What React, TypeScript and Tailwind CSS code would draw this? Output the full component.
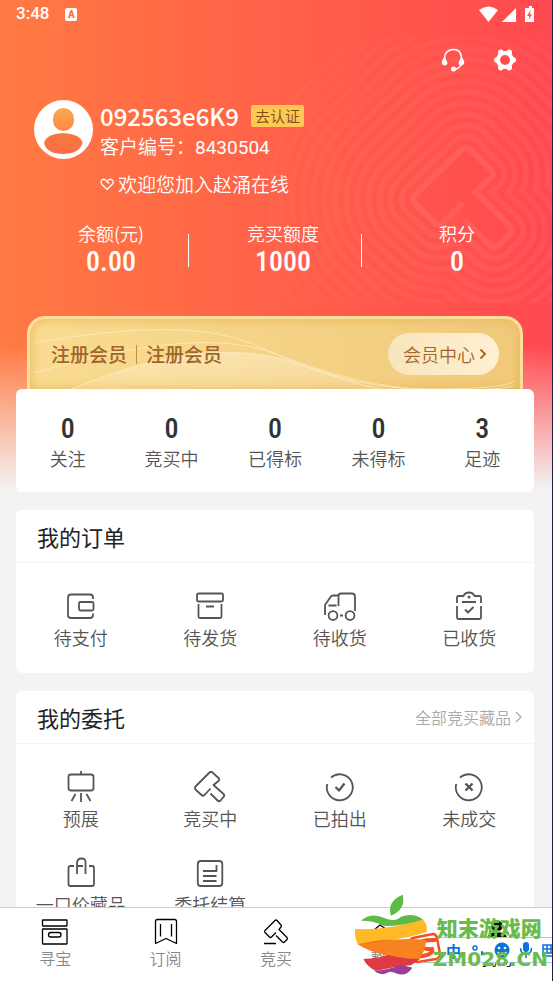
import type { ReactNode } from "react";

type Stat = { label: string; value: string };
type Entry = { label: string; icon: ReactNode };

const GAVEL_PATH =
  "M463 203 L443 223 Q439 227 435 223 L414 203 Q411 199 415 195 L461 150 Q466 145 471 150 L491 170 Q495 174 491 178 L475 192 L510 226 Q514 230 510 234 L499 245 Q495 249 490 245 L464 219";

const RINGS = [14, 13, 12, 11, 10, 9, 8, 7, 6, 5, 4, 3, 2, 1];

const counters: Stat[] = [
  { label: "关注", value: "0" },
  { label: "竞买中", value: "0" },
  { label: "已得标", value: "0" },
  { label: "未得标", value: "0" },
  { label: "足迹", value: "3" },
];

function LineIcon({ children }: { children: ReactNode }) {
  return (
    <svg
      aria-hidden="true"
      className="h-8 w-8"
      fill="none"
      stroke="currentColor"
      strokeLinecap="butt"
      strokeLinejoin="round"
      strokeWidth="1.800"
      viewBox="0 0 32 32"
    >
      {children}
    </svg>
  );
}

const orders: Entry[] = [
  {
    label: "待支付",
    icon: (
      <LineIcon>
        <path d="M28 9V7.500Q28 4.500 25 4.500H6Q3 4.500 3 7.500V25Q3 28 6 28H25Q28 28 28 25V23.500" />
        <rect height="8.500" rx="1.500" width="14.500" x="14" y="12" />
      </LineIcon>
    ),
  },
  {
    label: "待发货",
    icon: (
      <LineIcon>
        <rect height="8" rx="1.500" width="26" x="3" y="3.500" />
        <path d="M4.500 14V26.500Q4.500 28 6 28H26Q27.500 28 27.500 26.500V14M12 16.500H20" />
      </LineIcon>
    ),
  },
  {
    label: "待收货",
    icon: (
      <LineIcon>
        <path d="M1 25V15L6.500 7Q7.500 5.500 9 5.500H14M14.500 16V6Q14.500 3.500 17 3.500H28Q31 3.500 31 6.500V21M4.500 15.500H12.500M16 25.500H19" />
        <circle cx="9" cy="25.500" r="4.400" />
        <circle cx="26" cy="25.500" r="4.400" />
      </LineIcon>
    ),
  },
  {
    label: "已收货",
    icon: (
      <LineIcon>
        <path d="M4 13V7.500Q4 6 5.500 6H10.500Q12 2.500 16 2.500T21.500 6H26.500Q28 6 28 7.500V13M4 16V27.500Q4 29 5.500 29H26.500Q28 29 28 27.500V16M9 12H23M12 19.500L15 22.500L20.500 17" />
        <circle cx="16" cy="7" fill="currentColor" r=".6" />
      </LineIcon>
    ),
  },
];

const commissions: Entry[] = [
  {
    label: "预展",
    icon: (
      <LineIcon>
        <path d="M16 0V3M10.500 23L6.500 30M16 22V31M21.500 23L25.500 30" />
        <rect height="16" rx="2.500" width="25" x="3.500" y="3.500" />
      </LineIcon>
    ),
  },
  {
    label: "竞买中",
    icon: (
      <LineIcon>
        <path d="M16.500 17.500L10.500 24Q9 25.500 7.500 24L1.500 18.500Q.5 17 1.500 15.500L15.500 1.500Q17 0 18.500 1.500L24.500 7Q26 8.500 24.500 10L19.500 14L29.500 23Q31 24.500 29.500 26L26.500 29.500Q25 31 23.500 29.500L16.500 22.500" />
      </LineIcon>
    ),
  },
  {
    label: "已拍出",
    icon: (
      <LineIcon>
        <path d="M3.200 13A13 13 0 1 0 7 6.700" />
        <path d="M11.500 16L15 19.500L20.500 12.500" strokeWidth="2.200" />
      </LineIcon>
    ),
  },
  {
    label: "未成交",
    icon: (
      <LineIcon>
        <path d="M3.200 13A13 13 0 1 0 7 6.700" />
        <path d="M12.500 12.500L19.500 19.500M19.500 12.500L12.500 19.500" strokeWidth="2.400" />
      </LineIcon>
    ),
  },
  {
    label: "一口价藏品",
    icon: (
      <LineIcon>
        <path d="M9 9H5.500Q3.500 9 3.500 11V27Q3.500 29 5.500 29H27Q29 29 29 27V11Q29 9 27 9H24M12 17V6Q12 1.500 16.500 1.500T20.500 6V17M12 9H18" />
      </LineIcon>
    ),
  },
  {
    label: "委托结算",
    icon: (
      <LineIcon>
        <rect height="25" rx="3" width="24.500" x="3.800" y="4" />
        <path d="M9 14H22.500V8M9 19H22.500M9 24H22.500" />
      </LineIcon>
    ),
  },
];

function NavIcon({ children }: { children?: ReactNode }) {
  return (
    <svg
      aria-hidden="true"
      className="h-7 w-7 text-black"
      fill="none"
      stroke="currentColor"
      strokeLinejoin="round"
      strokeWidth="1.300"
      viewBox="0 0 28 28"
    >
      {children}
    </svg>
  );
}

const tabs: Entry[] = [
  {
    label: "寻宝",
    icon: (
      <NavIcon>
        <rect height="6" rx=".5" width="24.500" x="1.500" y="2" />
        <rect height="15" rx=".5" width="24.500" x="1.500" y="11" />
        <rect height="4.500" rx="2.200" width="12.500" x="7.500" y="14.500" />
      </NavIcon>
    ),
  },
  {
    label: "订阅",
    icon: (
      <NavIcon>
        <path d="M3.500 25.500V3.500Q3.500 1.500 5.500 1.500H22.500Q24.500 1.500 24.500 3.500V25.500L14 20.500ZM8.500 6V18.500M19.500 6V18.500" />
      </NavIcon>
    ),
  },
  {
    label: "竞买",
    icon: (
      <NavIcon>
        <path d="M14 14.500L9.500 19Q8.500 20 7.500 19L3 14.500Q2 13.500 3 12.500L13 2.500Q14 1.500 15 2.500L19 7Q20 8 19 9L17 11.500L25 19.500Q26 20.500 25 21.500L22.500 24Q21.500 25 20.500 24L14 17.500M2 25.500H14" />
      </NavIcon>
    ),
  },
  {
    label: "整点",
    icon: (
      <NavIcon>
        <path d="M2 12L8 7L14 11L20 16L14 25Z" />
      </NavIcon>
    ),
  },
  {
    label: "我的",
    icon: (
      <NavIcon>
        <circle cx="14" cy="8" fill="currentColor" r="5" />
        <path d="M5 19Q6 15 14 15T23 19V21H5Z" fill="currentColor" />
      </NavIcon>
    ),
  },
];

function HeaderPattern() {
  return (
    <svg
      aria-hidden="true"
      className="pointer-events-none absolute right-0 top-0"
      fill="none"
      height="303"
      viewBox="253 0 299 303"
      width="299"
    >
      <defs>
        <mask height="265" id="rings" maskUnits="userSpaceOnUse" width="299" x="253" y="38">
          <g strokeLinejoin="round" strokeLinecap="round">
            {RINGS.map((n) => (
              <g key={n}>
                <path
                  d={GAVEL_PATH}
                  stroke="white"
                  strokeOpacity={0.75 - n * 0.035}
                  strokeWidth={n * 22 + 6}
                />
                <path d={GAVEL_PATH} fill="black" stroke="black" strokeWidth={n * 22 - 5} />
              </g>
            ))}
            <path d={GAVEL_PATH} stroke="white" strokeLinecap="butt" strokeWidth="6" />
          </g>
        </mask>
      </defs>
      <rect fill="#ff8a80" fillOpacity=".24" height="265" mask="url(#rings)" width="299" x="253" y="38" />
    </svg>
  );
}

function StatusBar() {
  return (
    <div className="flex h-7 items-center justify-between pl-4 pr-[17px] text-white">
      <div className="flex items-center gap-4 font-[Roboto,sans-serif] text-[17px] font-medium">
        <span>3:48</span>
        <span className="flex h-[13px] w-3 items-center justify-center rounded-xs bg-white text-[10px] font-black text-[#ff7048]">
          A
        </span>
      </div>
      <svg aria-hidden="true" fill="white" height="18" viewBox="0 0 56 18" width="56">
        <path d="M0 5Q9.500-2 19 5L9.500 17Z" />
        <path d="M37 3V17H23Z" />
        <path d="M48 3H50V1H53V3H55V17H46V3Z" />
        <path d="M51.500 5L48 11H50.300L49.800 15L53 9.500H51Z" fill="#ff4e50" />
      </svg>
    </div>
  );
}

function HeaderActions() {
  return (
    <div className="mt-4 flex h-8 items-center justify-end gap-7 pr-[35px] text-white">
      <button aria-label="客服">
        <svg aria-hidden="true" fill="none" height="24" viewBox="0 0 24 24" width="24">
          <path d="M3.500 13V10Q4 2 12 1.500T20.500 10V14Q20 20 14 21.500" stroke="white" strokeWidth="1.600" />
          <path d="M4 9L6.500 15Q6 18 3 17.500Q0 16 1 13Q2 10 4 9ZM20 9L17.500 15Q18 18 21 17.500Q24 16 23 13Q22 10 20 9Z" fill="white" />
          <circle cx="12.500" cy="21" fill="white" r="2.500" />
        </svg>
      </button>
      <button aria-label="设置">
        <svg aria-hidden="true" fill="none" height="24" viewBox="0 0 24 24" width="24">
          <circle cx="12" cy="12" r="7" stroke="white" strokeWidth="4" />
          <g fill="white">
            <circle cx="3.800" cy="12" r="2.800" />
            <circle cx="20.200" cy="12" r="2.800" />
            <circle cx="7.800" cy="4.400" r="2.800" />
            <circle cx="16.200" cy="4.400" r="2.800" />
            <circle cx="7.800" cy="19.600" r="2.800" />
            <circle cx="16.200" cy="19.600" r="2.800" />
          </g>
        </svg>
      </button>
    </div>
  );
}

function Profile() {
  return (
    <section className="flex items-start gap-[7px] pl-[34px] pt-6 text-white">
      <svg aria-hidden="true" className="shrink-0" height="59" viewBox="0 0 59 59" width="59">
        <defs>
          <linearGradient id="head" x2="0" y2="1">
            <stop stopColor="#fca949" />
            <stop offset="1" stopColor="#ff8747" />
          </linearGradient>
          <linearGradient id="body" x2="0" y2="1">
            <stop stopColor="#f6793f" />
            <stop offset="1" stopColor="#ff6d48" />
          </linearGradient>
        </defs>
        <circle cx="29.500" cy="29.500" fill="white" r="29.500" />
        <rect fill="url(#head)" height="23" rx="10.500" width="21" x="19" y="8" />
        <path d="M10 43Q12 34 29 33Q47 34 48.500 43Q45 54 29 54T10 43Z" fill="url(#body)" />
      </svg>
      <div>
        <div className="flex h-8 items-center gap-3">
          <h1 className="text-2xl font-medium">092563e6K9</h1>
          <button className="h-[22px] rounded-xs bg-[#ffc854] px-1 text-[15px] leading-[22px] text-[#7d4c12]">
            去认证
          </button>
        </div>
        <p className="h-7 text-[19px] leading-7">
          客户编号：<span className="font-[Roboto,sans-serif] font-normal">8430504</span>
        </p>
        <p className="mt-2.5 flex h-7 items-center gap-1 text-[19px]">
          <svg aria-hidden="true" fill="none" height="14" stroke="white" strokeWidth="1.300" viewBox="0 0 14 14" width="14">
            <path d="M7 12.500L2 7.500Q0 5 2 3T7 4.500L9 6.500M7 4.500Q9.500 1 12 3T12 7.500L7 12.500" />
          </svg>
          欢迎您加入赵涌在线
        </p>
      </div>
    </section>
  );
}

function Value({ children }: { children: ReactNode }) {
  return (
    <strong className="font-['Roboto_Condensed','Liberation_Sans_Narrow','Noto_Sans_CJK_SC',sans-serif] text-[28px] font-medium leading-[34px]">
      {children}
    </strong>
  );
}

function Balances() {
  return (
    <section className="ml-[34px] mt-[23px] grid grid-cols-[155fr_173fr_190fr] text-center text-lg leading-6 text-white">
      <div className="flex items-center">
        <div className="flex flex-1 flex-col">
          <span>余额(元)</span>
          <Value>0.00</Value>
        </div>
        <i className="h-[33px] w-px bg-white" />
      </div>
      <div className="flex items-center">
        <div className="flex flex-1 flex-col pl-4">
          <span>竞买额度</span>
          <Value>1000</Value>
        </div>
        <i className="h-[33px] w-px bg-white" />
      </div>
      <div className="flex flex-col">
        <span>积分</span>
        <Value>0</Value>
      </div>
    </section>
  );
}

function MemberCard() {
  return (
    <section className="relative ml-[27px] mr-[29px] mt-[37px] flex h-[73px] items-center justify-between overflow-hidden rounded-t-[18px] border-x-3 border-t-3 border-[#fddf9c] bg-linear-to-r from-[#f9dc92] to-[#f0c97a] px-[21px] text-[#a1652a] shadow-[inset_0_0_12px_#e8b658]">
      <svg aria-hidden="true" className="absolute inset-0 h-full w-full" fill="none" preserveAspectRatio="none" viewBox="0 0 490 70">
        <defs>
          <linearGradient id="wave" x2="0" y2="1">
            <stop stopColor="#fff2d8" stopOpacity=".5" />
            <stop offset="1" stopColor="#fff2d8" stopOpacity=".15" />
          </linearGradient>
        </defs>
        <path d="M36 72Q170 15 260 42Q330 66 380 72Z" fill="url(#wave)" />
        <g stroke="#fff0cb" strokeOpacity=".65">
          <path d="M4 24Q155-3 220 24Q325 70 400 70T484 62" />
          <path d="M4 54Q170 5 245 35Q325 70 400 71T484 66" />
          <path d="M36 72Q170 15 260 42Q330 68 360 72" />
        </g>
      </svg>
      <p className="relative flex items-center gap-[9px] text-[19px] font-medium">
        <span>注册会员</span>
        <i className="h-[19px] w-px bg-[#c58d49]" />
        <span>注册会员</span>
      </p>
      <button className="relative flex h-[42px] items-center gap-1 rounded-full bg-linear-to-r from-[#f8e5bd] to-[#fff0d2] pl-[15px] pr-3 text-lg">
        会员中心
        <svg aria-hidden="true" fill="none" height="12" stroke="currentColor" strokeWidth="1.800" viewBox="0 0 8 12" width="8">
          <path d="M1.500 1.500L6 6L1.500 10.500" />
        </svg>
      </button>
    </section>
  );
}

function Panel({ title, entries, more }: { title: string; entries: Entry[]; more?: string }) {
  return (
    <section className="mt-[18px] rounded-md bg-white">
      <header className="flex h-[53px] items-center justify-between border-b border-[#f3f3f3] pl-[21px] pr-3">
        <h2 className="text-[22px] font-normal text-[#222]">{title}</h2>
        {more && (
          <a className="flex items-center gap-1 text-base text-[#aaa]" href="#all">
            {more}
            <svg aria-hidden="true" fill="none" height="12" stroke="currentColor" strokeWidth="1.300" viewBox="0 0 7 12" width="7">
              <path d="M1 1L6 6L1 11" />
            </svg>
          </a>
        )}
      </header>
      <div className="grid grid-cols-4 gap-y-[27px] pb-6 pt-[27px]">
        {entries.map(({ label, icon }) => (
          <button className="flex flex-col items-center gap-[3px] text-lg leading-6 text-[#555]" key={label}>
            {icon}
            <span className="whitespace-nowrap">{label}</span>
          </button>
        ))}
      </div>
    </section>
  );
}

function TabBar() {
  return (
    <nav className="flex h-[74px] shrink-0 border-t border-[#ccc] bg-white">
      {tabs.map(({ label, icon }) => (
        <a
          className="flex flex-1 flex-col items-center pt-2.5 text-base leading-6 text-[#888] last:text-[#222]"
          href={`#${label}`}
          key={label}
        >
          {icon}
          <span>{label}</span>
        </a>
      ))}
    </nav>
  );
}

function InputBar() {
  return (
    <div className="absolute bottom-[18px] right-0 flex h-[26px] w-[128px] items-center border-y border-[#afc7e2] bg-white pl-[22px] text-[#0b73d9]">
      <svg aria-hidden="true" className="absolute -left-4 -top-2" fill="none" height="36" viewBox="0 0 36 36" width="36">
        <path d="M5 8L25 4Q28 4 29 8L32 24Q32 28 28 29L10 32Q6 32 5 28L2 12Q2 9 5 8Z" fill="white" stroke="#f6501f" strokeWidth="2.500" />
        <path d="M27 10Q9 10 12 15T24 19Q27 25 8 27" stroke="#f6501f" strokeLinecap="round" strokeWidth="4" />
      </svg>
      <span className="text-[15px] font-bold leading-none">中</span>
      <svg aria-hidden="true" className="ml-2 shrink-0" height="20" viewBox="0 0 86 20" width="86">
        <circle cx="6" cy="8" fill="none" r="2" stroke="currentColor" strokeWidth="1.500" />
        <path d="M12 11Q15 11 14.500 14L12 16Z" fill="currentColor" />
        <circle cx="33" cy="10" fill="currentColor" r="7.500" />
        <circle cx="30" cy="8" fill="white" r="1.300" />
        <circle cx="36" cy="8" fill="white" r="1.300" />
        <path d="M28.500 12Q33 17 37.500 12" fill="none" stroke="white" strokeWidth="1.300" />
        <rect fill="currentColor" height="10" rx="3" width="6" x="54" y="2" />
        <path d="M51.500 8Q51.500 14 57 14T62.500 8M57 14V18" fill="none" stroke="currentColor" strokeWidth="1.500" />
        <path d="M74 5H90V16H74ZM74 9H90M74 13H90M78 5V13M82 5V13" fill="none" stroke="currentColor" strokeWidth="1.500" />
      </svg>
    </div>
  );
}

function SiteBadge() {
  return (
    <div className="pointer-events-none absolute bottom-0 right-0 flex items-end gap-2 overflow-hidden text-[#6abb4b]">
      <svg aria-hidden="true" height="91" viewBox="0 0 234 273" width="78">
        <path d="M120 77Q106 35 155 14Q166 57 120 77Z" fill="#5fba46" />
        <path d="M30 92Q60 65 100 84Q130 98 150 80Q190 66 217 90Q160 108 100 108Q70 92 30 92Z" fill="#5fba46" />
        <path d="M12 117C80 120 160 108 216 88Q232 108 226 125C180 145 90 152 20 163Q10 140 12 117Z" fill="#ffb927" />
        <path d="M20 163C90 150 160 143 226 150Q222 185 205 207C150 210 70 195 20 163Z" fill="#f7821f" />
        <path d="M20 163C80 155 110 150 140 146Q80 150 20 163Z" fill="#d96520" />
        <path d="M37 207Q80 206 110 195Q160 207 207 207L180 226Q130 230 75 243Q48 230 37 207Z" fill="#df3941" />
        <path d="M70 243Q120 237 150 224L184 233Q165 262 135 250Q118 240 105 250Q88 258 70 243Z" fill="#9b3c96" />
      </svg>
      <div className="pb-1 pr-1">
        <p className="text-[21px] font-black leading-7">知末游戏网</p>
        <p className="-ml-1 font-['DejaVu_Sans',sans-serif] text-xl font-bold leading-9">ZM028.CN</p>
      </div>
    </div>
  );
}

export default function App() {
  return (
    <div className="relative flex h-screen flex-col overflow-hidden border-r border-[#20203c] bg-[#f3f3f3] font-['Noto_Sans_CJK_SC',sans-serif] font-[350]">
      <main className="relative min-h-0 flex-1 overflow-hidden bg-[linear-gradient(to_bottom,rgba(243,243,243,0)_345px,#f3f3f3_490px),linear-gradient(to_right,#ff7a42,#ff6149_50%,#ff4950)]">
        <HeaderPattern />
        <div className="relative">
          <StatusBar />
          <HeaderActions />
          <Profile />
          <Balances />
          <MemberCard />
          <div className="pl-4 pr-[18px]">
            <section className="grid h-[103px] grid-cols-5 rounded-md bg-white pt-[23px] text-center">
              {counters.map(({ label, value }) => (
                <div className="flex flex-col text-[#333]" key={label}>
                  <Value>{value}</Value>
                  <span className="text-lg leading-6 text-[#555]">{label}</span>
                </div>
              ))}
            </section>
            <Panel entries={orders} title="我的订单" />
            <Panel entries={commissions} more="全部竞买藏品" title="我的委托" />
          </div>
        </div>
      </main>
      <TabBar />
      <InputBar />
      <SiteBadge />
    </div>
  );
}
